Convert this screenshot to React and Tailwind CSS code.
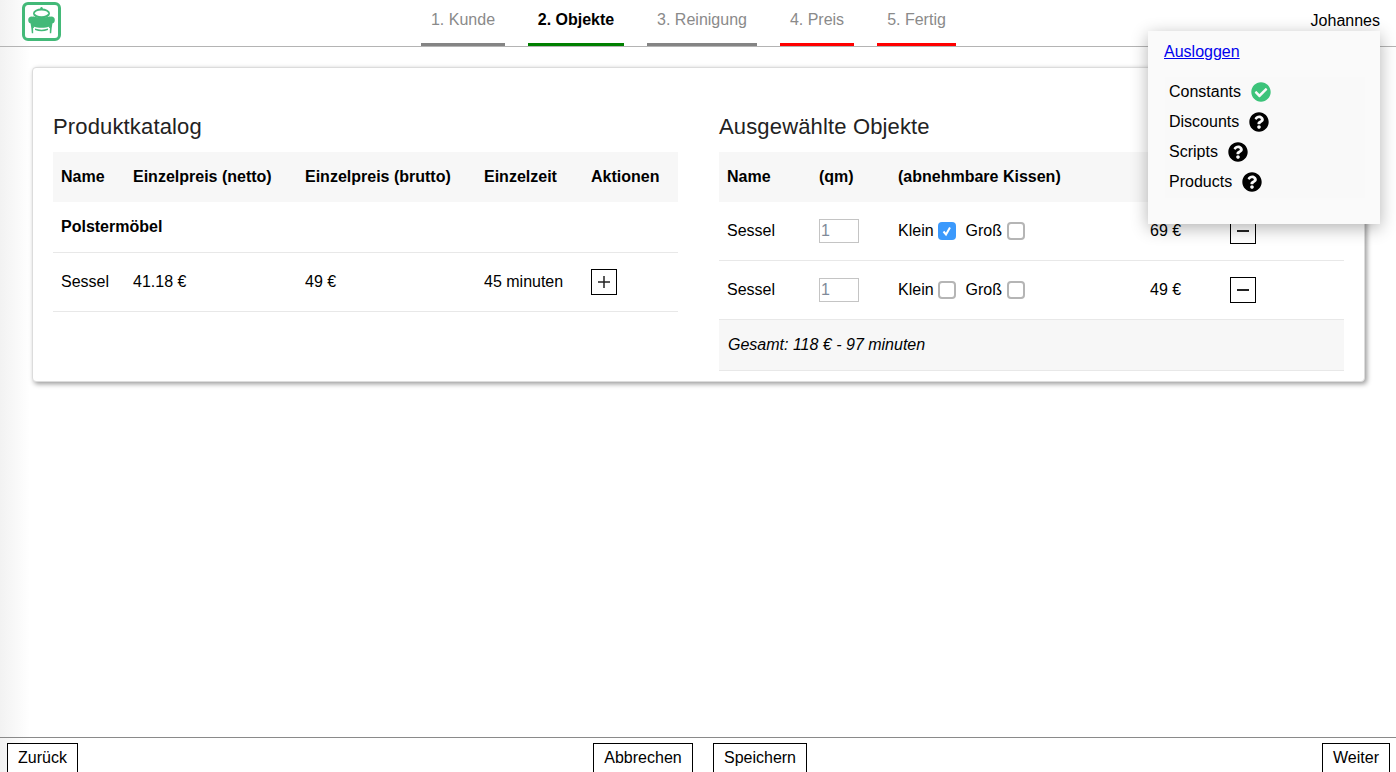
import React from "react";
import { FaCheckCircle, FaQuestionCircle } from "react-icons/fa";

const tabs = [
  { label: "1. Kunde", bar: "border-[#848484]", w: "w-[84px]" },
  { label: "2. Objekte", bar: "border-[#008000]", w: "w-[96px]", active: true },
  { label: "3. Reinigung", bar: "border-[#848484]", w: "w-[110px]" },
  { label: "4. Preis", bar: "border-[#ff0000]", w: "w-[74px]" },
  { label: "5. Fertig", bar: "border-[#ff0000]", w: "w-[79px]" },
];

const checks = [
  { label: "Constants", ok: true },
  { label: "Discounts" },
  { label: "Scripts" },
  { label: "Products" },
];

function Logo() {
  return (
    <div className="w-[39px] h-[39px] mt-[2px] ml-[22px] border-[3px] border-[#43b978] rounded-[6px] shrink-0">
      <svg viewBox="0 0 33 33" className="w-[33px] h-[33px]" fill="#43b978">
        <circle cx="16.500" cy="3.200" r="1.200" />
        <ellipse cx="16.500" cy="8.500" rx="8.500" ry="5" />
        <ellipse cx="16.500" cy="8.300" rx="6.600" ry="2.900" fill="#fff" />
        <circle cx="6.800" cy="15" r="3.600" />
        <circle cx="26.200" cy="15" r="3.600" />
        <path d="M8 11.500c5.500 1.300 11.500 1.300 17 0v10c-5 1.800-12 1.800-17 0z" />
        <path d="M5.200 16h3.300l.4 7h-.8l.1 5.200H6.800L6.300 23z" />
        <path d="M27.800 16h-3.300l-.4 7h.8l-.1 5.200h1.400l.5-5.200z" />
        <path d="M10 23.600c4 1.500 9 1.500 13 0v1.300c-4 1.700-9 1.700-13 0z" />
      </svg>
    </div>
  );
}

function Checkbox({ checked }) {
  if (checked) {
    return (
      <span className="shrink-0 w-[18px] h-[18px] rounded-[4px] bg-[#3b99fc] flex items-center justify-center">
        <svg viewBox="0 0 12 12" className="w-[12px] h-[12px]" fill="none" stroke="#fff" strokeWidth="2">
          <path d="M2.500 6.500l2.500 3 4-7" />
        </svg>
      </span>
    );
  }
  return <span className="block shrink-0 w-[18px] h-[18px] rounded-[4px] bg-white border-2 border-[#b5b5b5]" />;
}

function SquareButton({ sign }) {
  return (
    <button className="w-[26px] h-[26px] border border-black flex items-center justify-center bg-white">
      <svg viewBox="0 0 24 24" className="w-[24px] h-[24px]" stroke="#222" strokeWidth="2">
        {sign === "+" && <path d="M12 6v12" strokeWidth="1.500" />}
        <path d="M6 12h12" strokeWidth={sign === "+" ? "1.500" : "2"} />
      </svg>
    </button>
  );
}

function SelectedRow({ klein, price, height }) {
  return (
    <tr className={`${height} border-b border-[#e8e8e8]`}>
      <td className="px-2">Sessel</td>
      <td className="px-2">
        <input
          readOnly
          value="1"
          className="block w-[40px] h-[24px] border border-[#c4c4c4] px-[1px] text-[#7f8a99] outline-none"
        />
      </td>
      <td className="px-2">
        <div className="flex items-center">
          <span>Klein</span>
          <span className="ml-[4px]"><Checkbox checked={klein} /></span>
          <span className="ml-[10px]">Groß</span>
          <span className="ml-[5px]"><Checkbox /></span>
        </div>
      </td>
      <td className="px-2">{price}</td>
      <td className="px-2"><SquareButton sign="-" /></td>
    </tr>
  );
}

function FooterButton({ width, children }) {
  return (
    <button className={`${width} h-[30px] border border-black bg-white leading-[26px]`}>{children}</button>
  );
}

export default function App() {
  return (
    <div
      className="relative h-screen overflow-hidden flex flex-col bg-linear-to-r from-[#f2f2f2] to-white to-[30px] text-black text-base"
      style={{ fontFamily: '"Liberation Sans", Arial, sans-serif' }}
    >
      <header className="h-[47px] shrink-0 flex border-b border-[#b4b4b4]">
        <Logo />
        <nav className="flex gap-[23px] ml-[360px]">
          {tabs.map((t) => (
            <div
              key={t.label}
              className={`${t.w} h-[46px] border-b-[3px] ${t.bar} pt-[11px] leading-[18px] text-center ${
                t.active ? "font-bold" : "text-[#8a8a8a]"
              }`}
            >
              {t.label}
            </div>
          ))}
        </nav>
        <div className="ml-auto mr-[16px] pt-[12px] leading-[18px]">Johannes</div>
      </header>

      <div className="absolute z-10 left-[1148px] top-[31px] w-[232px] h-[193px] bg-[#fafafa] shadow-[0_4px_16px_rgba(0,0,0,0.3)] pt-[12px] px-[16px]">
        <a href="#" className="text-[#0000ee] underline leading-[18px] block">Ausloggen</a>
        <ul className="mt-[16px] ml-[1px] w-[200px] h-[121px] bg-[#f9f9f9] pl-[4px]">
          {checks.map((c) => (
            <li key={c.label} className="h-[30px] flex items-center gap-[10px]">
              <span>{c.label}</span>
              {c.ok ? (
                <FaCheckCircle className="w-[20px] h-[20px] text-[#3cc37a]" />
              ) : (
                <FaQuestionCircle className="w-[20px] h-[20px] text-black" />
              )}
            </li>
          ))}
        </ul>
      </div>

      <main className="flex-1 pt-[20px] pl-[32px] pr-[31px]">
        <div className="h-[315px] bg-white border border-[#dcdcdc] rounded-[4px] shadow-[2px_2px_5px_rgba(0,0,0,0.4)] px-[20px] pt-[46px] grid grid-cols-2 gap-[41px] items-start">
          <section>
            <h2 className="text-[22px] tracking-[0.15px] leading-[26px] mb-[12px] text-[#222]">Produktkatalog</h2>
            <table className="w-full table-fixed border-collapse text-left">
              <thead>
                <tr className="h-[50px] bg-[#f7f7f7] font-bold">
                  <th className="w-[72px] px-2">Name</th>
                  <th className="w-[172px] px-2">Einzelpreis (netto)</th>
                  <th className="w-[179px] px-2">Einzelpreis (brutto)</th>
                  <th className="w-[107px] px-2">Einzelzeit</th>
                  <th className="px-2">Aktionen</th>
                </tr>
              </thead>
              <tbody>
                <tr className="h-[50px] border-b border-[#e8e8e8]">
                  <td colSpan={5} className="px-2 font-bold">Polstermöbel</td>
                </tr>
                <tr className="h-[59px] border-b border-[#e8e8e8]">
                  <td className="px-2">Sessel</td>
                  <td className="px-2">41.18 €</td>
                  <td className="px-2">49 €</td>
                  <td className="px-2">45 minuten</td>
                  <td className="px-2"><SquareButton sign="+" /></td>
                </tr>
              </tbody>
            </table>
          </section>

          <section>
            <h2 className="text-[22px] tracking-[0.15px] leading-[26px] mb-[12px] text-[#222]">Ausgewählte Objekte</h2>
            <table className="w-full table-fixed border-collapse text-left">
              <thead>
                {/* the last two headers sit behind the user menu */}
                <tr className="h-[50px] bg-[#f7f7f7] font-bold">
                  <th className="w-[92px] px-2">Name</th>
                  <th className="w-[79px] px-2">(qm)</th>
                  <th className="w-[252px] px-2">(abnehmbare Kissen)</th>
                  <th className="w-[80px] px-2"></th>
                  <th className="px-2"></th>
                </tr>
              </thead>
              <tbody>
                <SelectedRow klein price="69 €" height="h-[58px]" />
                <SelectedRow price="49 €" height="h-[59px]" />
                <tr className="h-[51px] bg-[#f7f7f7] border-b border-[#e8e8e8]">
                  <td colSpan={5} className="pl-[9px] pr-2 italic">Gesamt: 118 € - 97 minuten</td>
                </tr>
              </tbody>
            </table>
          </section>
        </div>
      </main>

      <footer className="h-[35px] shrink-0 border-t border-[#8a8a8a] flex justify-between px-[6px] pt-[5px]">
        <span className="pl-[1px]"><FooterButton width="w-[71px]">Zurück</FooterButton></span>
        <div className="flex gap-[20px]">
          <FooterButton width="w-[100px]">Abbrechen</FooterButton>
          <FooterButton width="w-[94px]">Speichern</FooterButton>
        </div>
        <FooterButton width="w-[68px]">Weiter</FooterButton>
      </footer>
    </div>
  );
}
